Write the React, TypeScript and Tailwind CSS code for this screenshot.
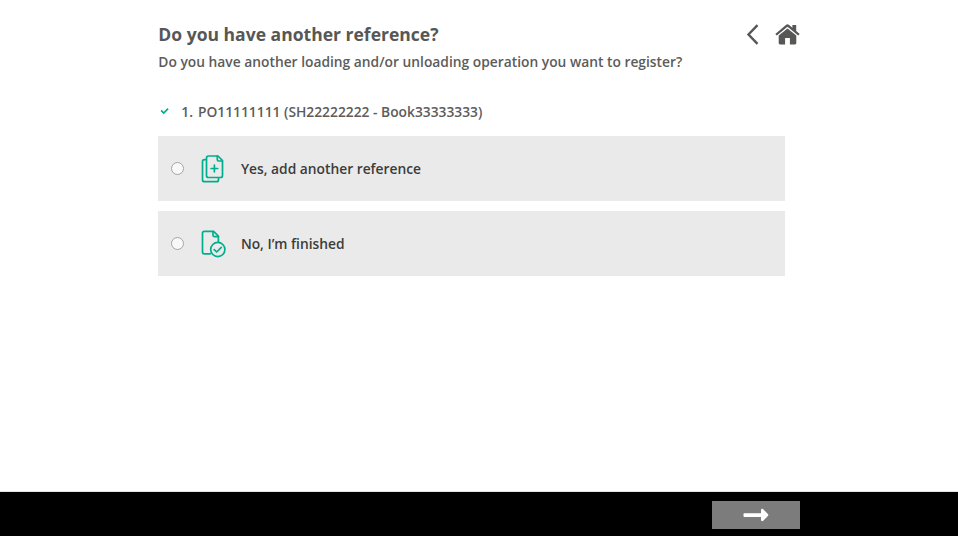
import { useState } from 'react';
import type { ReactNode } from 'react';

const references = ['PO11111111 (SH22222222 - Book33333333)'];

function AddDocumentIcon() {
  return (
    <svg
      width="28"
      height="32"
      viewBox="0 0 28 32"
      fill="none"
      stroke="#00ae8d"
      strokeWidth="1.7"
      strokeLinecap="round"
      strokeLinejoin="round"
    >
      <path d="M18 3H8.5A2 2 0 0 0 6.5 5v17.5a2 2 0 0 0 2 2h12a2 2 0 0 0 2-2V7.5Z" />
      <path d="M17.3 3.2V6.7a1.3 1.3 0 0 0 1.3 1.3h3.7" />
      <path d="M6.3 6.7H4.5a2 2 0 0 0-2 2v18a2 2 0 0 0 2 2h12a2 2 0 0 0 2-2v-1.9" />
      <path d="M14.4 12.2v6.6M11.1 15.5h6.6" />
    </svg>
  );
}

function FinishedDocumentIcon() {
  return (
    <svg
      width="28"
      height="32"
      viewBox="0 0 28 32"
      fill="none"
      stroke="#00ae8d"
      strokeWidth="1.7"
      strokeLinecap="round"
      strokeLinejoin="round"
    >
      <path d="M10.2 25.8H4.2a1.7 1.7 0 0 1-1.7-1.7V5a1.7 1.7 0 0 1 1.7-1.7h9.4l4.8 4.9v5.6" />
      <path d="M13 3.5v3.8a1.3 1.3 0 0 0 1.3 1.3h4" />
      <circle cx="17.8" cy="21.5" r="7.1" />
      <path d="m14.2 21.6 2.5 2.4 4.6-4.6" />
    </svg>
  );
}

interface OptionProps {
  label: string;
  icon: ReactNode;
  checked: boolean;
  onSelect: () => void;
}

function Option({ label, icon, checked, onSelect }: OptionProps) {
  return (
    <label className="flex h-[65px] cursor-pointer items-center bg-[#eaeaea] pl-[12.4px] text-[#3c3c3b]">
      <input
        type="radio"
        name="another-reference"
        checked={checked}
        onChange={onSelect}
        className="h-[13px] w-[13px] appearance-none rounded-full border border-[#a5a5a5] bg-[#f8f8f8] checked:border-4 checked:border-[#00ae8d]"
      />
      <span className="ml-4">{icon}</span>
      <span className="ml-[13.2px] pt-0.5">{label}</span>
    </label>
  );
}

export default function App() {
  const [choice, setChoice] = useState<'yes' | 'no' | null>(null);

  return (
    <div className="flex h-screen flex-col overflow-hidden bg-white font-['Open_Sans',sans-serif] text-[13.8px] font-semibold text-[#5c5c5b]">
      <main className="ml-[158.3px] w-[641.7px] flex-1">
        <header className="flex justify-between pt-[22px]">
          <div>
            <h1 className="text-[17.55px] leading-6 font-bold text-[#575756]">Do you have another reference?</h1>
            <p className="mt-1.5 leading-5">
              Do you have another loading and/or unloading operation you want to register?
            </p>
          </div>
          <nav className="flex gap-4">
            <button aria-label="Back" className="flex h-6 items-center">
              <svg width="14" height="22" viewBox="0 0 14 22" fill="none" stroke="#575756" strokeWidth="2.4">
                <path d="M12.5 2.2 3.5 11.5l9 9.3" />
              </svg>
            </button>
            <button aria-label="Home" className="flex h-6 items-center">
              <svg width="25" height="22" viewBox="0 0 25 22" fill="#575756">
                <path d="M12.5 5.4 3.7 12.6V20c0 .9.5 1.4 1.4 1.4h5V15h4.8v6.4h5c.9 0 1.4-.5 1.4-1.4v-7.4Z" />
                <path d="M11.2 1.8a2 2 0 0 1 2.6 0l3.6 3V2h3.8v5.9l3.5 3-1.5 1.7L12.5 3.8 1.8 12.6.3 10.9Z" />
              </svg>
            </button>
          </nav>
        </header>

        <ol className="mt-[30px]">
          {references.map((reference, i) => (
            <li key={reference} className="flex h-5 items-center">
              <svg width="12" height="10" viewBox="0 0 12 10" fill="none" stroke="#00ae8d" strokeWidth="1.7">
                <path d="m3.1 3.4 2.6 2.6 4.4-4.4" />
              </svg>
              <span className="ml-[11px]">{i + 1}.</span>
              <span className="ml-[5px]">{reference}</span>
            </li>
          ))}
        </ol>

        <div className="mt-3.5 flex w-[627px] flex-col gap-2.5">
          <Option
            label="Yes, add another reference"
            icon={<AddDocumentIcon />}
            checked={choice === 'yes'}
            onSelect={() => setChoice('yes')}
          />
          <Option
            label="No, I’m finished"
            icon={<FinishedDocumentIcon />}
            checked={choice === 'no'}
            onSelect={() => setChoice('no')}
          />
        </div>
      </main>

      <footer className="h-[45px] border-t border-[#e1e4e7] bg-black">
        <div className="ml-[158px] flex w-[642px] justify-end pt-[9px]">
          <button aria-label="Next" className="flex h-7 w-[88px] items-center justify-center bg-[#7c7c7c]">
            <svg width="26" height="14" viewBox="0 0 26 14" fill="white">
              <path d="M1.5 5.2H18V2.3c0-1.6 1.2-2 2.2-1.1l4.7 4.7c.6.6.6 1.5 0 2.1l-4.7 4.7c-1 .9-2.2.5-2.2-1.1V8.9H1.5C.5 8.9.5 8.5.5 7.8V6.2c0-.6.2-1 1-1Z" />
            </svg>
          </button>
        </div>
      </footer>
    </div>
  );
}
